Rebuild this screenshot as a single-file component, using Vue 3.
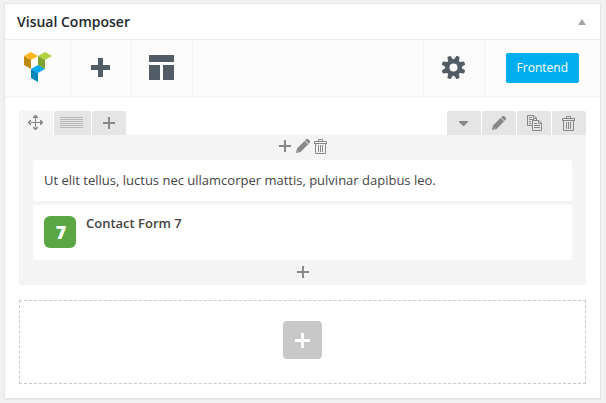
<script setup>
import { ref, h } from 'vue'

const open = ref(true)

const icon = (box, children) => {
  const [, , width, height] = box.split(' ')
  return () => h('svg', { width, height, viewBox: box, fill: 'currentColor', 'aria-hidden': 'true' }, children())
}
const p = (d, extra = {}) => h('path', { d, ...extra })
const line = { fill: 'none', stroke: 'currentColor' }

const PlusIcon = icon('-2 -2 16 16', () => [p('M5 0h2v5h5v2H7v5H5V7H0V5h5z')])
const PencilIcon = icon('-1 -1 16 16', () => [
  p('M0 14l1-4.500 7.500-7.500 3.500 3.500L4.500 13zM9.200 1.300L10.500 0h1.500l2 2v1.500l-1.300 1.300z'),
  p('M9 2l3.500 3.500', { stroke: '#bbb', 'stroke-width': '1' }),
  p('M1.500 11.500l1.500 1.500', { stroke: '#bbb', 'stroke-width': '0.7' }),
])
const TrashIcon = icon('-1 -1 16 16', () => [
  p('M4.500 2V0.500h4V2M0.500 4V2.500H12.500V4M0 4.500H13M1.500 5v9.500h10V5M4.500 6v7M6.500 6v7M8.500 6v7', line),
])
const CopyIcon = icon('-1 0 16 16', () => [
  p('M5 10.500H0.500V0.500H7L9.500 3V5M5.500 5.500H12L14.500 8V15.500H5.500zM6.500 1v2.500H9M11.500 6v2.500H14M2 2.500h3M2 4.500h5M2 6.500h2M2 8.500h2M7 8.500h3M7 10.500h6M7 12.500h6', line),
])
const MoveIcon = icon('0 0 16 16', () => [
  p('M7 2h1v5h5v1H8v5H7V8H2V7h5zM7 0h1l2 2v1H5V2zM7 15h1l2-2v-1H5v1zM0 7v1l2 2h1V5H2zM15 7v1l-2 2h-1V5h1z'),
])
const LinesIcon = icon('0 -2 25 16', () => [
  p('M0 0h23v1H0zM0 2h23v1H0zM0 4h23v1H0zM0 6h23v1H0zM0 8h23v1H0zM0 10h23v1H0z'),
])
const CaretIcon = icon('-3 -6 16 16', () => [p('M0 0h9v1L5 5H4L0 1z')])
</script>

<template>
  <main class="page">
    <section class="panel">
      <header class="head">
        <h2>Visual Composer</h2>
        <button class="toggle" type="button" aria-label="Toggle panel" :aria-expanded="open" @click="open = !open">
          <svg width="8" height="6" viewBox="0 0 8 6" fill="currentColor"><path d="M4 0l4 6H0z" /></svg>
        </button>
      </header>

      <nav class="toolbar">
        <a class="tool logo" href="#" aria-label="Visual Composer">
          <svg width="28" height="30" viewBox="0 0 28 30">
            <path fill="#ffb81c" d="M0 4l7-4 7 4-7 4z" />
            <path fill="#bd8b12" d="M0 4l7 4v9l-7-4z" />
            <path fill="#b0d140" d="M14 4l7-4 7 4-7 4z" />
            <path fill="#7fa32c" d="M14 4l7 4v9l-7-4z" />
            <path fill="#00abee" d="M7 17l7-4 7 4-7 4z" />
            <path fill="#0285ba" d="M7 17l7 4v9l-7-4z" />
          </svg>
        </a>
        <button class="tool" type="button" aria-label="Add element">
          <svg width="19" height="19" viewBox="0 0 19 19" fill="currentColor"><path d="M7 0h5v7h7v5h-7v7H7v-7H0V7h7z" /></svg>
        </button>
        <button class="tool" type="button" aria-label="Templates">
          <svg width="25" height="25" viewBox="0 0 25 25" fill="currentColor"><path d="M0 0h25v7H0zM0 10h11v15H0zM14 10h11v15H14z" /></svg>
        </button>
        <button class="tool settings" type="button" aria-label="Settings">
          <svg width="23" height="23" viewBox="-11.500 -11.500 23 23" fill="currentColor">
            <path fill-rule="evenodd" d="M0-8.500a8.500 8.500 0 0 1 0 17a8.500 8.500 0 0 1 0-17zM0-4a4 4 0 0 0 0 8a4 4 0 0 0 0-8z" />
            <g v-for="n in 8" :key="n" :transform="`rotate(${n * 45 + 22.5})`">
              <path d="M-2.500-7.500l.6-3.600q.1-.9 1-.9h1.800q.9 0 1 .9l.6 3.600z" />
            </g>
          </svg>
        </button>
        <div class="action"><button class="frontend" type="button">Frontend</button></div>
      </nav>

      <div v-if="open" class="body">
        <section class="row">
          <div class="tabs">
            <button class="tab active" type="button" aria-label="Move row"><MoveIcon /></button>
            <button class="tab layout" type="button" aria-label="Row layout"><LinesIcon /></button>
            <button class="tab" type="button" aria-label="Add column"><PlusIcon /></button>
            <button class="tab first-right" type="button" aria-label="Toggle row"><CaretIcon /></button>
            <button class="tab" type="button" aria-label="Edit row"><PencilIcon /></button>
            <button class="tab" type="button" aria-label="Clone row"><CopyIcon /></button>
            <button class="tab" type="button" aria-label="Delete row"><TrashIcon /></button>
          </div>
          <div class="column">
            <div class="controls">
              <button type="button" aria-label="Prepend element"><PlusIcon /></button>
              <button type="button" aria-label="Edit column"><PencilIcon /></button>
              <button type="button" aria-label="Delete column"><TrashIcon /></button>
            </div>
            <div class="items">
              <article class="item"><p>Ut elit tellus, luctus nec ullamcorper mattis, pulvinar dapibus leo.</p></article>
              <article class="item module">
                <span class="badge" aria-hidden="true">7</span>
                <h3>Contact Form 7</h3>
              </article>
            </div>
            <div class="controls bottom">
              <button type="button" aria-label="Append element"><PlusIcon /></button>
            </div>
          </div>
        </section>

        <div class="drop">
          <button class="add" type="button" aria-label="Add element">
            <svg width="15" height="15" viewBox="0 0 15 15" fill="currentColor"><path d="M6 0h3v6h6v3H9v6H6V9H0V6h6z" /></svg>
          </button>
        </div>
      </div>
    </section>
  </main>
</template>

<style>
body {
  background: #f1f1f1;
}
</style>

<style scoped>
.page {
  padding: 3px 5px 4px 4px;
  font: 13px/20px "Open Sans", sans-serif;
  color: #444;
}
.page * {
  box-sizing: border-box;
}
button {
  display: flex;
  align-items: center;
  justify-content: center;
  margin: 0;
  padding: 0;
  border: 0;
  background: none;
  color: inherit;
  font: inherit;
  cursor: pointer;
}
svg {
  display: block;
}
h2,
h3,
p {
  margin: 0;
}
.panel {
  background: #fff;
  border: 1px solid #e5e5e5;
  box-shadow: 0 1px 1px rgba(0, 0, 0, 0.04);
}
.head {
  display: flex;
  align-items: center;
  justify-content: space-between;
  height: 36px;
  padding: 0 14px 0 12px;
  border-bottom: 1px solid #eee;
}
.head h2 {
  font-size: 14px;
  font-weight: 600;
  color: #23282d;
}
.toggle {
  color: #a0a5aa;
}
.toolbar {
  display: flex;
  height: 57px;
  background: #fcfcfc;
  border-bottom: 1px solid #f3f3f3;
}
.tool {
  display: flex;
  align-items: center;
  justify-content: center;
  width: 61px;
  padding: 0 1px 1px 0;
  border-right: 1px solid #f3f3f3;
  color: #515c66;
}
.logo {
  width: 66px;
  padding: 0 18px 2px 19px;
}
.settings {
  width: 62px;
  margin-left: auto;
  border-left: 1px solid #f3f3f3;
}
.action {
  display: flex;
  align-items: center;
  padding: 0 21px;
}
.frontend {
  height: 30px;
  padding: 0 11px;
  border-radius: 2px;
  background: #00aef0;
  color: #fff;
  font-size: 12px;
}
.body {
  display: flex;
  flex-direction: column;
  gap: 15px;
  padding: 14px;
}
.tabs {
  display: flex;
  gap: 1px;
}
.tab {
  width: 34px;
  height: 24px;
  border-radius: 2px 2px 0 0;
  background: #e5e5e5;
  color: #888;
}
.active {
  background: #f4f4f4;
}
.layout {
  width: 37px;
  color: #b8b8b8;
}
.first-right {
  margin-left: auto;
}
.column {
  padding: 0 14px;
  background: #f4f4f4;
}
.controls {
  display: flex;
  align-items: flex-start;
  justify-content: center;
  gap: 2px;
  height: 25px;
  padding: 3px 0 0 1px;
  color: #888;
}
.bottom {
  padding-top: 4px;
}
.items {
  display: flex;
  flex-direction: column;
  gap: 4px;
}
.item {
  padding: 11px;
  border-radius: 2px;
  background: #fff;
}
.item p {
  line-height: 19px;
}
.module {
  display: flex;
  gap: 10px;
  padding-bottom: 12px;
}
.module h3 {
  font-size: 13px;
  font-weight: 600;
  line-height: 14px;
}
.badge {
  display: flex;
  align-items: center;
  justify-content: center;
  width: 32px;
  height: 32px;
  padding-left: 2px;
  border-radius: 6px;
  background: #5ba745;
  color: #fff;
  font: 800 18px/32px "Open Sans", sans-serif;
}
.drop {
  display: flex;
  align-items: center;
  justify-content: center;
  padding: 20px 0 24px;
  border: 1px dashed #c9c9c9;
}
.add {
  width: 39px;
  height: 38px;
  border-radius: 4px;
  background: #c8c8c8;
  color: #fff;
}
</style>
